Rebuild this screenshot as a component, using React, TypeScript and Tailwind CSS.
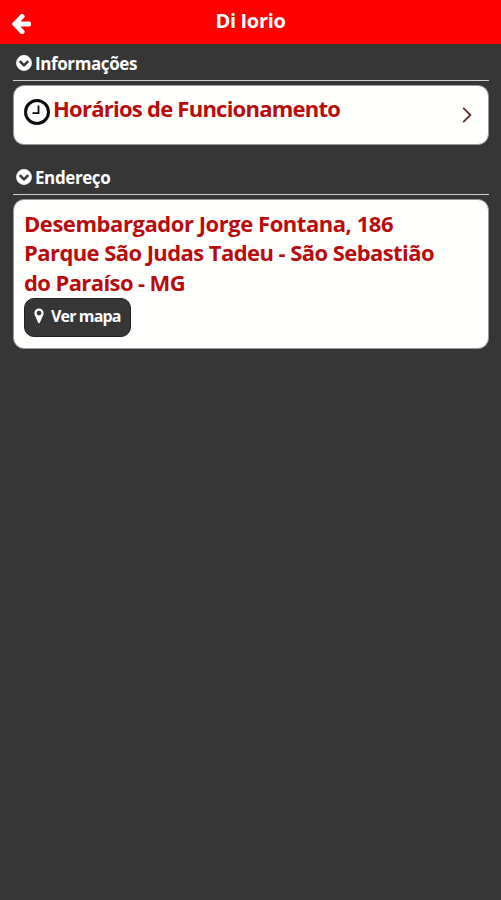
import type { ReactNode } from "react";

function ArrowLeftIcon() {
  return (
    <svg width="19" height="20" viewBox="180 200 1490 1510" preserveAspectRatio="none" fill="currentColor">
      <path d="M1664 896v128q0 53-32.5 90.5t-84.5 37.5h-704l293 294q38 36 38 90t-38 90l-75 76q-37 37-90 37-52 0-91-37l-651-652q-37-37-37-90 0-52 37-91l651-650q38-38 91-38 52 0 90 38l75 74q38 38 38 91t-38 91l-293 293h704q52 0 84.5 37.5t32.5 90.5z" />
    </svg>
  );
}

function ChevronCircleIcon() {
  return (
    <svg width="16" height="16" viewBox="0 0 16 16" fill="none" className="shrink-0">
      <circle cx="8" cy="8" r="7.9" fill="currentColor" />
      <path d="M3.8 6.1L8 10.3L12.2 6.1" stroke="#363636" strokeWidth="2.5" strokeLinejoin="round" />
    </svg>
  );
}

function ClockIcon() {
  return (
    <svg width="28" height="28" viewBox="0 0 28 28" fill="none" stroke="#0c0c0c" className="shrink-0">
      <circle cx="14" cy="14" r="11.5" strokeWidth="3" />
      <path d="M15.5 7.5V15.2H9.5" strokeWidth="1.8" />
    </svg>
  );
}

function MarkerIcon() {
  return (
    <svg width="10" height="16" viewBox="0 0 10 16" fill="currentColor" className="shrink-0">
      <path
        fillRule="evenodd"
        d="M5 .5A4.6 4.6 0 0 0 .4 5.1C.4 6 .6 6.7 1 7.4L4.2 14.7Q5 16 5.8 14.7L9 7.4C9.4 6.7 9.6 6 9.6 5.1A4.6 4.6 0 0 0 5 .5ZM5 2.7A2.4 2.4 0 1 1 5 7.5A2.4 2.4 0 1 1 5 2.7Z"
      />
    </svg>
  );
}

function SectionTitle({ children }: { children: ReactNode }) {
  return (
    <h2 className="flex h-[37px] items-center gap-[3px] border-b border-[#d0d0d0] pt-[2px] pl-[3px] text-[17px] font-bold tracking-[-0.4px] text-white">
      <ChevronCircleIcon />
      <span className="pt-[2px] whitespace-nowrap">{children}</span>
    </h2>
  );
}

export default function App() {
  return (
    <div className="flex h-[900px] w-[501px] flex-col overflow-hidden bg-[#363636] font-['Open_Sans','Noto_Sans',sans-serif]">
      <header className="grid h-11 shrink-0 grid-cols-[1fr_auto_1fr] items-center bg-[#ff0000] text-white">
        <button className="mt-1 ml-[12px] w-5">
          <ArrowLeftIcon />
        </button>
        <h1 className="pb-[2px] text-[20px] leading-6 font-bold tracking-[-0.35px]">Di Iorio</h1>
      </header>

      <main className="pr-3 pl-[13px]">
        <SectionTitle>Informações</SectionTitle>
        <button className="mt-1 flex h-[60px] w-full items-start rounded-[11px] border border-[#999] bg-[#fffffe] pl-[9px] text-left">
          <span className="mt-[12px] flex">
            <ClockIcon />
          </span>
          <span className="ml-[2px] mt-[8px] whitespace-nowrap text-[22px] leading-[29px] font-bold tracking-[-0.75px] text-[#b80c0c]">
            Horários de Funcionamento
          </span>
          <svg width="10" height="18" viewBox="0 0 10 18" fill="none" className="ml-auto mr-4 mt-5">
            <path d="M1.2 1.8L8.4 9L1.2 16.2" stroke="#5b3029" strokeWidth="1.8" />
          </svg>
        </button>

        <div className="mt-[13px]">
          <SectionTitle>Endereço</SectionTitle>
        </div>
        <div className="mt-1 h-[150px] rounded-[11px] border border-[#999] bg-[#fffffe] pl-[10px] pt-[9px]">
          <address className="text-[22px] leading-[29.4px] font-bold whitespace-nowrap text-[#b80c0c] not-italic">
            <p className="tracking-[-0.45px]">Desembargador Jorge Fontana, 186</p>
            <p className="tracking-[-0.57px]">Parque São Judas Tadeu - São Sebastião</p>
            <p className="tracking-[-0.6px]">do Paraíso - MG</p>
          </address>
          <button className="mt-px flex h-[39px] w-[107px] items-center rounded-[10px] border border-[#222] bg-[#363636] pb-[3px] pl-[9px] text-white">
            <MarkerIcon />
            <span className="ml-[7px] whitespace-nowrap text-base font-bold tracking-[-0.85px]">Ver mapa</span>
          </button>
        </div>
      </main>
    </div>
  );
}
